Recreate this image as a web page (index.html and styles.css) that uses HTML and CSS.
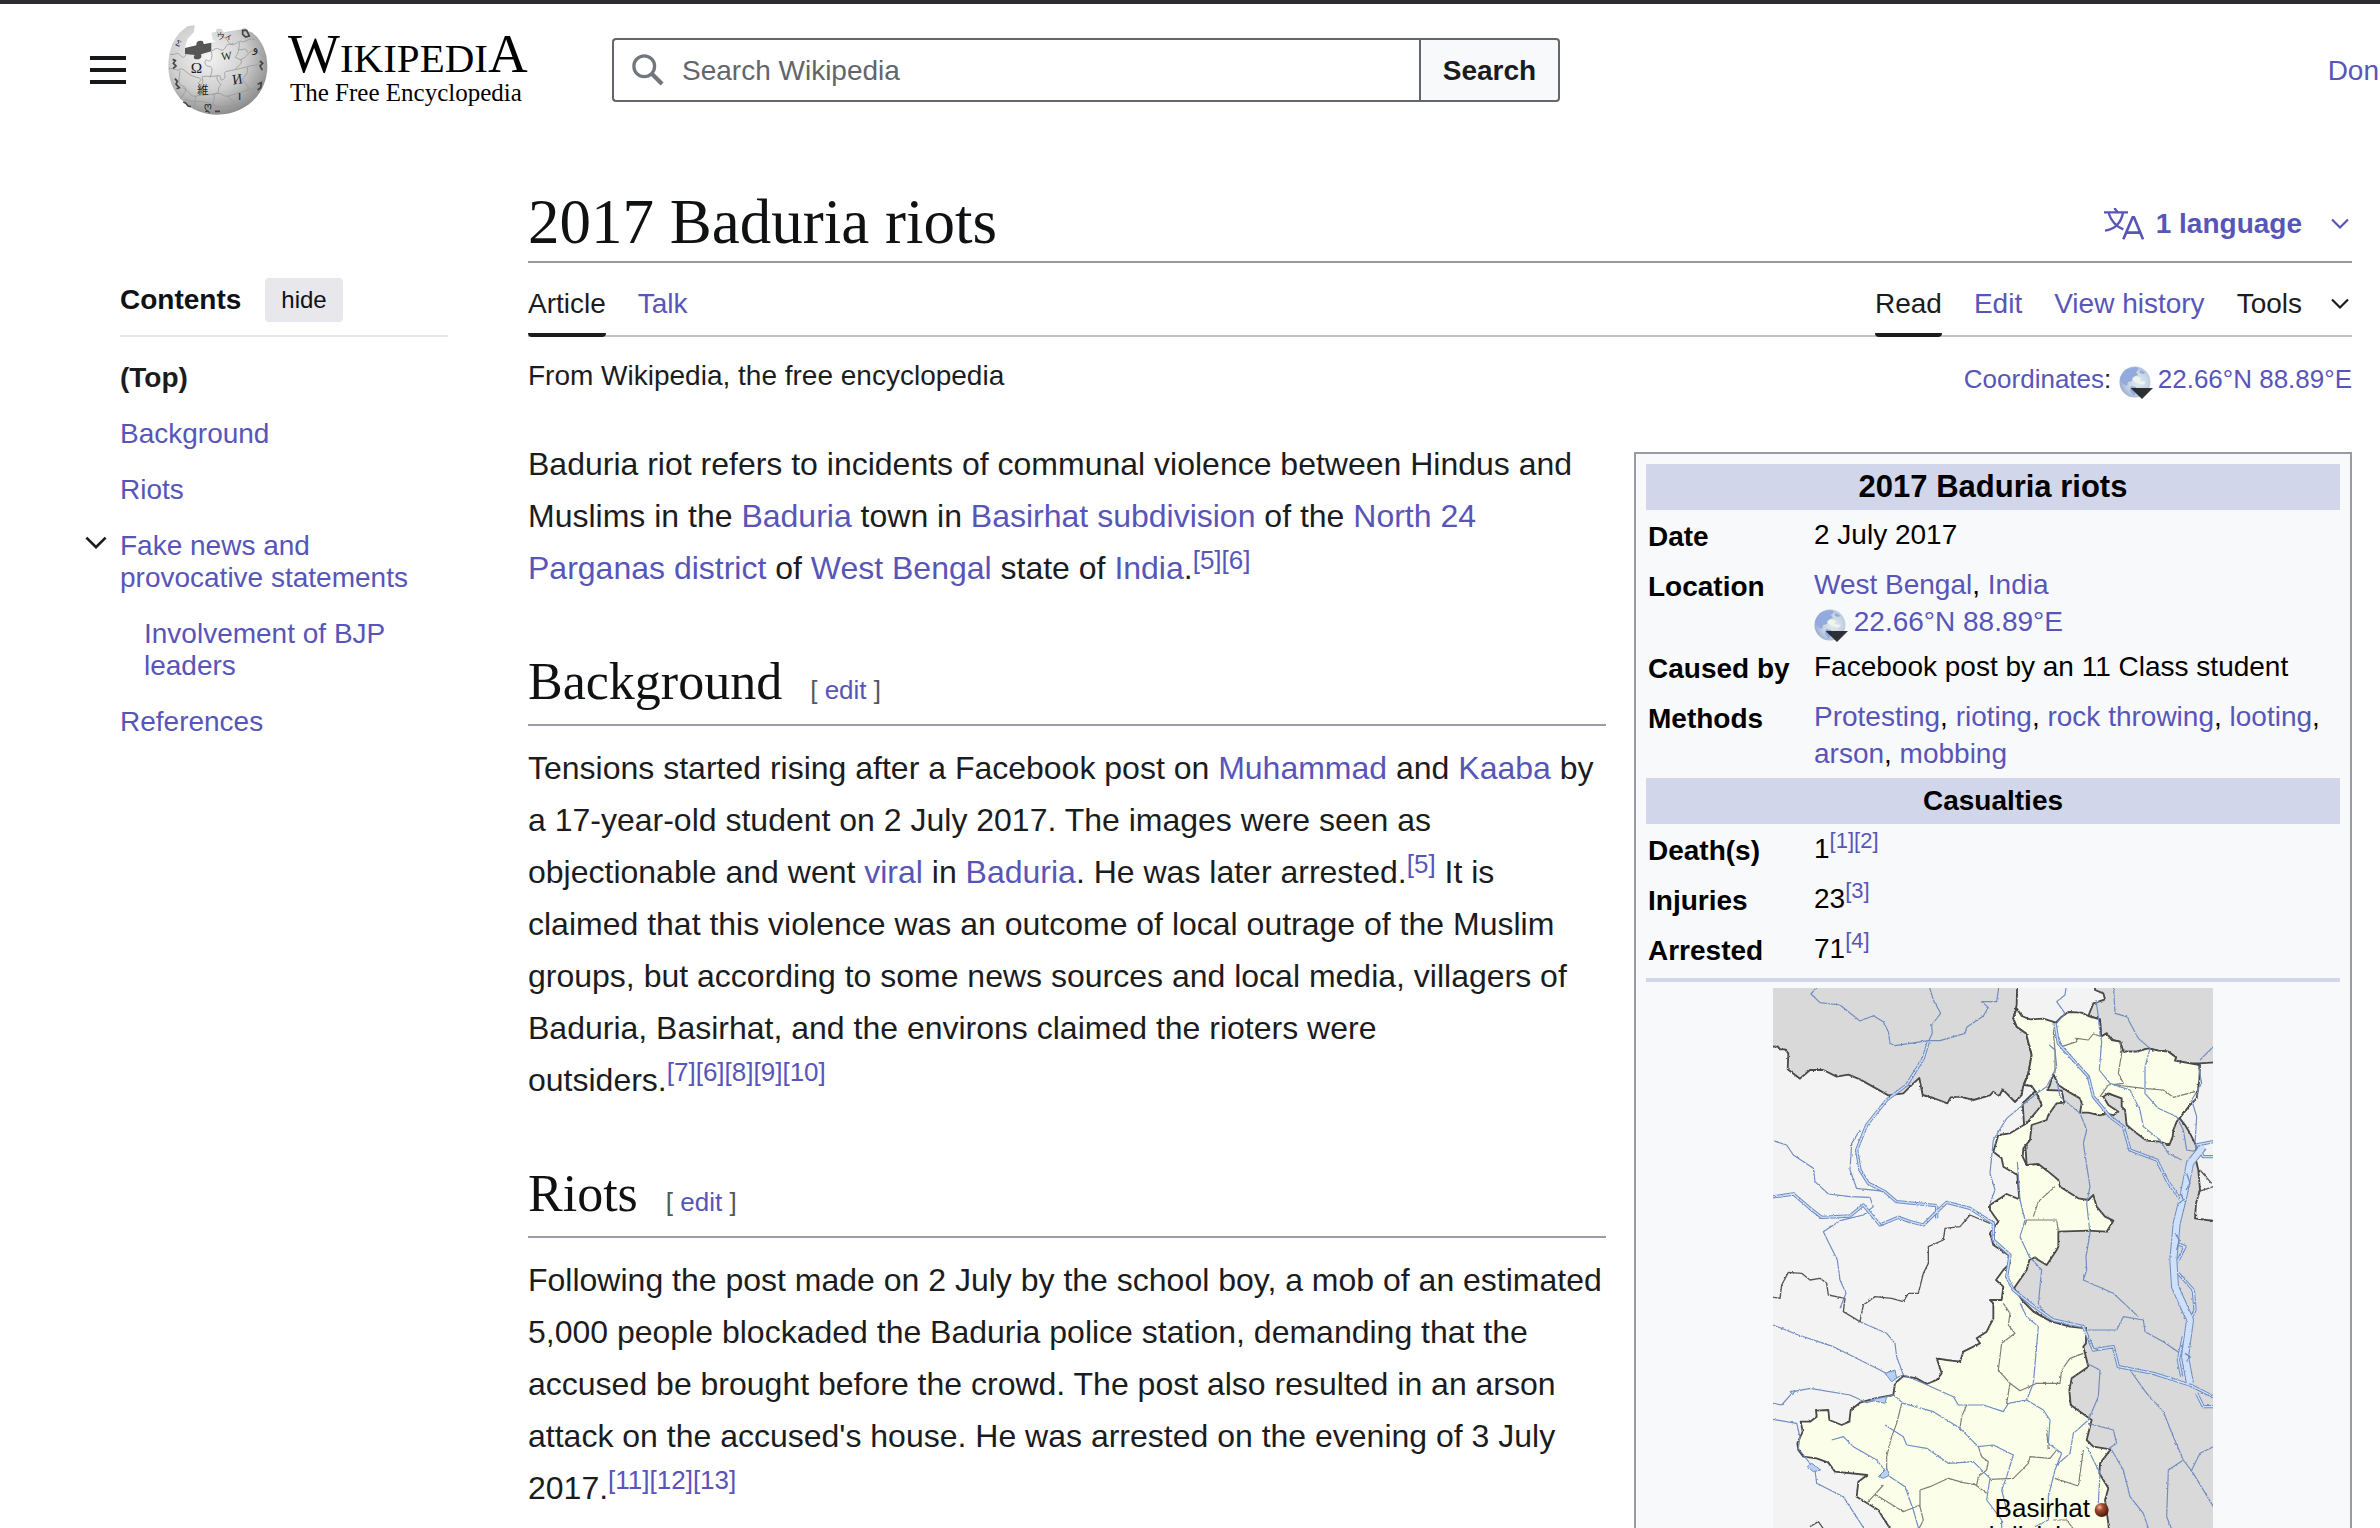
FILE: index.html
```html
<!DOCTYPE html>
<html lang="en">
<head>
<meta charset="utf-8">
<title>2017 Baduria riots - Wikipedia</title>
<link rel="stylesheet" href="styles.css">
</head>
<body>
<svg class="defs" width="0" height="0" aria-hidden="true">
  <defs>
    <radialGradient id="ball" cx=".4" cy=".35" r=".7"><stop offset="0" stop-color="#f4f4f4"/><stop offset=".55" stop-color="#cfcfcf"/><stop offset="1" stop-color="#858585"/></radialGradient>
    <radialGradient id="earth" cx=".6" cy=".5" r=".6"><stop offset="0" stop-color="#e2eeee"/><stop offset=".7" stop-color="#bccbe0"/><stop offset="1" stop-color="#9aa9cc"/></radialGradient>
    <radialGradient id="dot" cx=".35" cy=".3" r=".75"><stop offset="0" stop-color="#f0b8a0"/><stop offset=".35" stop-color="#a04a30"/><stop offset="1" stop-color="#4a1408"/></radialGradient>
    <symbol id="globe" viewBox="0 0 34 34">
      <circle cx="16" cy="16" r="15.500" fill="url(#earth)"/>
      <path d="M2 10 6 4 12 2 17 1 20 3 17 6 19 9 14 11 13 15 9 16 8 20 4 18 1 14ZM12 20 17 21 18 25 15 30 11 25ZM21 4 26 6 25 8 21 7Z" fill="#93aade"/>
      <path d="M17 10 22 12 20 15 27 16 24 19 16 16 13 13Z" fill="#f0f3ee"/>
      <path d="M11.500 22H34L23 33Z" fill="#1c1e20" opacity=".9"/>
    </symbol>
    <symbol id="chevron" viewBox="0 0 20 20"><path d="M2 5.500 10 13.500 18 5.500" fill="none" stroke="currentColor" stroke-width="2.200"/></symbol>
    <filter id="jag" x="0" y="0" width="1" height="1"><feTurbulence type="fractalNoise" baseFrequency=".12" numOctaves="2" seed="4"/><feDisplacementMap in="SourceGraphic" scale="7" xChannelSelector="R" yChannelSelector="G"/></filter>
  </defs>
</svg>

<header class="header">
  <button class="menu" aria-label="Main menu"><span></span><span></span><span></span></button>
  <a class="logo" href="#" aria-label="Wikipedia">
    <svg class="puzzle" viewBox="0 0 360 324" aria-hidden="true">
      <path d="M104 28C98 26 92 30 84 30C44 55 25 98 25 150C25 232 88 296 172 296C256 296 322 235 322 150C322 115 311 87 291 62L282 55C275 46 266 46 259 46C264 36 252 34 246 40L191 49L184 38L170 39L168 47L155 50L158 73L168 76L154 80L75 97L82 70L102 48Z" fill="url(#ball)"/>
      <path d="M75 96 109 88C108 78 114 73 127 75C132 77 128 84 133 84L154 80V106L123 115C127 125 120 131 110 130C101 130 99 122 104 117L75 114Z" fill="#565656"/>
      <g fill="none" stroke="#999" stroke-width="2.500">
        <path d="M30 115C45 118 50 108 58 115S70 130 78 116M154 107C160 130 150 140 142 133S130 150 146 151 155 170 150 185M154 106C175 90 172 100 183 102S195 95 200 88 215 90 220 80M26 158C45 155 50 168 60 160S80 178 110 184 106 200 118 205 130 190 126 184 155 184 172 179 175 200 190 190 180 170 205 165 255 155 270 150 290 155 305 130M200 70C210 85 215 90 228 82S240 70 236 100 215 120 235 128 240 145 225 160M240 75C255 85 268 60 285 72M240 132C270 120 265 100 285 105S300 125 320 120M60 165C58 190 50 205 68 210S75 230 60 250M68 215C95 230 90 245 110 240S135 238 160 235 170 215 180 210 165 195 172 180M110 240C100 255 110 265 100 280M160 235C170 250 150 260 165 268S185 275 178 294M160 235C190 225 185 245 205 240S235 230 255 225 260 205 250 195 268 180 262 155M205 240C215 260 230 255 225 275M255 225C275 215 285 225 310 195M75 250C100 262 130 250 155 265S230 270 280 245"/>
        <path d="M172 48C180 62 190 60 200 70M236 100C250 105 258 90 262 110"/>
      </g>
      <g fill="#222" font-family="Liberation Serif, serif">
        <text x="92" y="172" font-size="46">Ω</text><text x="183" y="131" font-size="34" transform="rotate(-6 200 120)">W</text><text x="217" y="203" font-size="42" transform="rotate(-8 235 190)">И</text><text x="112" y="233" font-size="34" font-family="Noto Sans CJK JP, sans-serif">維</text><text x="170" y="70" font-size="24" font-family="Noto Sans CJK JP, sans-serif">ウィ</text><text x="234" y="252" font-size="36" font-family="DejaVu Sans, sans-serif">ו</text><text x="278" y="108" font-size="34" font-family="DejaVu Sans, sans-serif">و</text><text x="132" y="281" font-size="30" font-family="DejaVu Sans, sans-serif">ღ</text><text x="48" y="90" font-size="26" transform="rotate(25 55 82)">Σ</text>
      </g>
      <path d="M248 43 260 43 268 60 257 63 248 55ZM38 130 46 134 40 142 48 150 39 158M300 135 308 142 300 150 307 162M45 188 52 196 48 204 58 215 50 218M293 205 304 200 302 215 293 222M70 258 78 262 84 270 93 272M165 286H180" fill="none" stroke="#444" stroke-width="5"/>
    </svg>
    <span class="words"><span class="wordmark"><b>W</b>IKIPEDI<b>A</b></span><span class="tagline">The Free Encyclopedia</span></span>
  </a>
  <form class="search" role="search">
    <label class="search-field">
      <svg viewBox="0 0 34 34" aria-hidden="true"><circle cx="13" cy="13" r="11" fill="none" stroke="#72777d" stroke-width="3.500"/><path d="M21 21 32 32" stroke="#72777d" stroke-width="4.500"/></svg>
      <input type="search" placeholder="Search Wikipedia" aria-label="Search Wikipedia">
    </label>
    <button type="button">Search</button>
  </form>
  <a class="donate" href="#">Don</a>
</header>

<div class="page">
  <nav class="toc" aria-label="Contents">
    <div class="toc-head"><strong>Contents</strong><button>hide</button></div>
    <ul>
      <li><a class="current" href="#">(Top)</a></li>
      <li><a href="#">Background</a></li>
      <li><a href="#">Riots</a></li>
      <li><button class="toggle" aria-label="Toggle subsection"><svg><use href="#chevron"/></svg></button><a href="#">Fake news and provocative statements</a>
        <ul><li><a href="#">Involvement of BJP leaders</a></li></ul></li>
      <li><a href="#">References</a></li>
    </ul>
  </nav>

  <main>
    <div class="title-row">
      <h1>2017 Baduria riots</h1>
      <button class="lang">
        <svg class="lang-icon" viewBox="0 0 120 96" aria-hidden="true"><g fill="none" stroke="currentColor"><path d="M0 13H72M31 0 41 13" stroke-width="7"/><path d="M14 15C22 42 38 56 58 64M57 15C50 48 30 64 3 68" stroke-width="7"/><path d="M58 94 86 28H90L117 94M67 74H109" stroke-width="8"/></g></svg>
        1 language <svg class="chev"><use href="#chevron"/></svg></button>
    </div>
    <div class="tabs">
      <a class="active" href="#">Article</a><a href="#">Talk</a>
      <span class="spacer"></span>
      <a class="active" href="#">Read</a><a href="#">Edit</a><a href="#">View history</a>
      <button class="tools">Tools <svg class="chev"><use href="#chevron"/></svg></button>
    </div>
    <div class="sub">
      <span>From Wikipedia, the free encyclopedia</span>
      <span class="coords"><a href="#">Coordinates</a>: <svg class="globe"><use href="#globe"/></svg> <a href="#">22.66°N 88.89°E</a></span>
    </div>
    <article>
      <table class="infobox">
        <tbody>
        <tr><th class="bar title" colspan="2">2017 Baduria riots</th></tr>
        <tr><th>Date</th><td>2 July 2017</td></tr>
        <tr><th>Location</th><td><a href="#">West Bengal</a>, <a href="#">India</a><br><svg class="globe"><use href="#globe"/></svg> <a href="#">22.66°N 88.89°E</a></td></tr>
        <tr><th>Caused by</th><td>Facebook post by an 11 Class student</td></tr>
        <tr><th>Methods</th><td><a href="#">Protesting</a>, <a href="#">rioting</a>, <a href="#">rock throwing</a>, <a href="#">looting</a>, <a href="#">arson</a>, <a href="#">mobbing</a></td></tr>
        <tr><th class="bar" colspan="2">Casualties</th></tr>
        <tr><th>Death(s)</th><td>1<sup><a href="#">[1]</a><a href="#">[2]</a></sup></td></tr>
        <tr><th>Injuries</th><td>23<sup><a href="#">[3]</a></sup></td></tr>
        <tr><th>Arrested</th><td>71<sup><a href="#">[4]</a></sup></td></tr>
        <tr><td class="map-cell" colspan="2"><div class="map">
          <svg viewBox="39 54 1320 1620" aria-label="Map of West Bengal">
            <rect x="39" y="54" width="1320" height="1620" fill="#f3f3f3"/>
            <g filter="url(#jag)" stroke-linejoin="round">
              <g fill="#d9d9d9" stroke="#484848" stroke-width="5.500">
                <path d="M0 232 53 229 60 238 75 238 85 250 83 298 120 326 150 300 190 300 230 320 265 314 300 328 385 376 430 370 460 340 478 324 488 375 520 384 562 400 572 382 600 380 640 390 690 376 700 365 718 378 728 358 765 396 785 375 790 345 805 310 815 255 798 190 770 170 760 145 770 105 772 20 0 20Z"/>
                <path d="M1005 20 1005 60 1030 70 1035 88 1000 100 985 138 1020 148 1023 200 1040 190 1055 210 1080 215 1090 245 1130 245 1165 235 1195 242 1225 245 1248 262 1245 272 1290 280 1318 280 1400 275 1400 20Z"/>
                <path d="M880 310 960 340 1100 390 1255 440 1275 465 1290 490 1310 530 1305 560 1315 600 1320 660 1308 700 1305 745 1340 750 1400 757V1720H1040L1000 1500 960 1350 900 1250 940 1150 940 1085 870 1053 820 1025 790 995 762 955 750 800 800 585 788 400Z"/>
              </g>
              <path d="M760 145 770 115 785 138 810 148 850 146 888 158 905 140 925 126 965 128 985 138 1020 148 1023 200 1040 190 1055 210 1080 215 1090 245 1130 245 1165 235 1195 242 1225 245 1248 262 1245 272 1290 280 1320 285 1318 330 1310 385 1290 405 1270 430 1250 455 1240 480 1238 500 1228 525 1200 515 1160 512 1130 490 1100 465 1095 420 1085 410 1085 385 1045 370 1030 380 1045 405 1075 425 1060 436 1040 430 1020 436 985 428 960 428 965 400 960 385 930 368 895 345 880 312 870 345 862 360 905 362 913 398 890 400 865 435 860 450 815 465 810 510 790 535 788 560 800 585 835 582 865 605 895 630 900 650 955 685 985 690 1000 675 1010 710 1035 740 1060 752 1040 785 985 782 895 785 895 830 890 840 880 855 860 885 835 870 825 862 808 870 800 900 762 955 790 995 820 1025 870 1053 930 1070 978 1075 978 1120 970 1130 985 1190 935 1225 928 1260 932 1305 995 1350 980 1410 1000 1430 1052 1438 1020 1480 1018 1510 1045 1555 1035 1590 1045 1660 1050 1720 400 1720 400 1690 370 1645 355 1620 290 1580 295 1535 322 1515 225 1505 205 1478 170 1465 130 1460 115 1440 112 1420 128 1385 122 1355 150 1355 170 1340 168 1322 205 1320 208 1350 245 1365 268 1355 272 1320 300 1298 345 1285 400 1275 405 1240 430 1218 470 1225 500 1242 530 1230 545 1210 530 1165 560 1170 600 1175 610 1145 660 1120 650 1105 680 1085 700 1045 700 1000 690 990 725 990 730 950 708 930 730 900 750 880 745 855 700 825 690 790 715 755 690 720 690 705 740 672 778 688 772 615 730 590 725 565 700 545 715 495 750 490 800 460 845 405 830 370 815 348 792 345 805 310 815 255 798 190 770 170Z" fill="#fbfee8" stroke="#484848" stroke-width="5.500"/>
              <path d="M30 980 60 985 65 945 85 907 125 910 150 930 180 925 200 940 205 975 255 985 250 1025 300 1055 310 1005 345 980 395 985 430 995 445 970 475 970 490 910 505 880 505 830 550 810 555 775 600 770 630 735 690 760M1320 600 1355 640M1315 665 1360 650M150 1670 175 1655 200 1690" fill="none" stroke="#555" stroke-width="4"/>
              <path d="M885 160 880 190 905 230 950 215 950 205 985 210 1000 192 1025 200M880 190 885 240 885 310M1080 215 1085 250 1075 310 1090 340 1045 345 1020 380M1070 345 1150 355 1210 360 1240 382 1305 365M795 765 800 750 890 750 895 785M820 740 835 695 885 650M730 1000 750 1030 745 1065 765 1090 725 1120 715 1200 750 1240 740 1300 745 1300M750 1240 780 1262 830 1240 900 1240 905 1200 930 1165 970 1150M425 1300 410 1360 395 1400 380 1460 380 1500M620 1305 605 1340 600 1375M655 1430 665 1460 685 1475 680 1500 655 1520 650 1545 610 1538M690 1528 760 1525 805 1480 810 1460 870 1465 890 1440M610 1538 565 1525 510 1550 480 1560 480 1610 490 1650 470 1690M345 1573 430 1625 480 1605M345 1573 370 1545M885 1525 955 1548 970 1440M640 1540 680 1570M320 1600 345 1573M865 1440 860 1380M880 1650 920 1650 950 1690" fill="none" stroke="#7d7d76" stroke-width="3.500"/>
              <g fill="none" stroke="#6f8cc0" stroke-width="3.500">
                <path d="M180 40 153 72 180 98 240 105 300 153 340 137 370 155 385 185 390 220 405 227 505 212 540 212 615 190 620 172 670 138 685 112 665 95 710 95 718 40M505 40 520 90 542 130 515 165 517 190 505 215"/>
                <path d="M39 512 80 525 100 555 160 595 165 635 205 672 270 680 330 682 340 710 310 735 240 752 190 785 232 870 240 930 258 970 240 1015M380 665 290 655 270 600 275 520 300 480M690 700 705 660 690 610 700 510 740 445 830 370 860 350 890 290 885 240 868 225M920 40 915 75 890 95 915 130 885 165 905 230"/>
                <path d="M1008 90 1015 140 1020 190 1025 215 1018 300 1050 340 1110 360 1140 420 1150 470 1200 510 1225 550 1265 570M1060 40 1065 130 1100 140 1135 205 1170 235 1155 290 1155 370 1195 415 1250 440 1270 480 1280 540 1310 545M1315 285 1325 340 1295 390 1310 440 1305 520M1320 270 1360 230M890 330 900 380 960 430 980 480 970 520 990 650 980 700 990 790 978 860 980 900 970 930 1060 970 1135 1040M772 575 780 690 795 750 780 800 808 860 845 900 835 1000 860 1040M780 1000 800 1040 835 1070 820 1240 800 1290 850 1320 870 1350 865 1420 905 1450 885 1500 865 1580 865 1650 825 1670"/>
                <path d="M39 1065 115 1095 220 1130 270 1155 360 1200 405 1225 430 1215 490 1240 580 1280 595 1305 670 1305 730 1325 745 1300 800 1290M300 1055 380 1090 405 1120 410 1160 430 1215M39 1300 65 1305 100 1265 150 1255 270 1275 320 1298 400 1275 430 1300 520 1325 600 1375 655 1430 700 1425 760 1455 740 1520 725 1560 740 1620M375 1365 430 1400 440 1425 500 1435 565 1480 640 1475 690 1525 680 1590 725 1650 725 1700M215 1410 250 1400 280 1430 350 1470 390 1520 435 1550 460 1620 480 1690M39 1348 110 1360 120 1400 115 1435 165 1500 170 1540 250 1580 315 1680M980 1080 1070 1080 1090 1040 1150 1050 1155 1085 1210 1115 1260 1150M980 1180 1020 1200 1015 1280 985 1350 940 1390 930 1450 890 1485M1110 1200 1160 1270 1210 1325 1240 1400 1270 1470 1300 1510 1360 1610M1295 1500 1320 1450 1360 1430M1270 1470 1225 1500 1220 1640 1240 1690M1055 1440 1090 1500 1110 1580 1150 1630 1170 1690M980 1430 1020 1510 1015 1600M985 1360 1060 1380 1070 1420 1040 1440"/>
              </g>
              <path d="M375 1210 405 1200 410 1225 395 1235ZM330 1290 380 1280 375 1300ZM142 1490 155 1480 182 1500 160 1505ZM355 1520 380 1495 390 1515 370 1525ZM90 1265 105 1262 98 1275Z" fill="#b8d0f5" stroke="#6f8cc0" stroke-width="3"/>
              <g fill="none" stroke="#6f8cc0" stroke-width="10">
                <path d="M505 215 490 265 440 345 380 390 320 465 290 540 300 600 325 640 375 665 410 695 530 707M30 682 100 672 150 715 185 742 270 738 310 705 360 765 415 742 450 755 490 765 520 735 560 697 630 715 700 760 700 810 750 855 740 920 760 960 810 1000 880 1050 970 1070 1000 1140 1060 1130 1075 1190 1180 1210 1290 1245 1360 1280M885 160 895 220 985 320 1000 380 1050 440 1090 470 1110 540 1190 570 1220 630 1255 680M530 707 530 745"/>
                <path d="M1330 530 1290 580 1270 680 1250 760 1240 870 1245 950 1290 1050 1275 1160 1290 1240" stroke-width="24"/>
                <path d="M1360 515 1310 525 1330 560 1360 560M1255 910 1300 960 1305 1020 1285 1060M1270 1100 1255 1170 1265 1220M1255 870 1275 830 1250 820M1310 1270 1330 1310 1360 1310"/>
                <path d="M505 215 490 265 440 345 380 390 320 465 290 540 300 600 325 640 375 665 410 695 530 707M30 682 100 672 150 715 185 742 270 738 310 705 360 765 415 742 450 755 490 765 520 735 560 697 630 715 700 760 700 810 750 855 740 920 760 960 810 1000 880 1050 970 1070 1000 1140 1060 1130 1075 1190 1180 1210 1290 1245 1360 1280M885 160 895 220 985 320 1000 380 1050 440 1090 470 1110 540 1190 570 1220 630 1255 680M530 707 530 745M1360 515 1310 525 1330 560 1360 560M1255 910 1300 960 1305 1020 1285 1060M1270 1100 1255 1170 1265 1220M1255 870 1275 830 1250 820M1310 1270 1330 1310 1360 1310" stroke="#cfe0fb" stroke-width="4"/>
                <path d="M1330 530 1290 580 1270 680 1250 760 1240 870 1245 950 1290 1050 1275 1160 1290 1240" stroke="#cfe0fb" stroke-width="18"/>
                <path d="M1280 610 1290 640 1278 660M1262 670 1270 690 1258 700M1245 790 1258 810 1250 840M1275 1150 1290 1160 1280 1175" stroke-width="4"/>
              </g>
            </g>
            <circle cx="1025" cy="1620" r="21" fill="url(#dot)"/>
          </svg>
          <span class="place">Basirhat<br>subdivision</span>
        </div></td></tr>
        </tbody>
      </table>
      <p>Baduria riot refers to incidents of communal violence between Hindus and Muslims in the <a href="#">Baduria</a> town in <a href="#">Basirhat subdivision</a> of the <a href="#">North 24 Parganas district</a> of <a href="#">West Bengal</a> state of <a href="#">India</a>.<sup><a href="#">[5]</a><a href="#">[6]</a></sup></p>
      <div class="heading"><h2>Background</h2><span class="edit">[ <a href="#">edit</a> ]</span></div>
      <p>Tensions started rising after a Facebook post on <a href="#">Muhammad</a> and <a href="#">Kaaba</a> by a 17-year-old student on 2 July 2017. The images were seen as objectionable and went <a href="#">viral</a> in <a href="#">Baduria</a>. He was later arrested.<sup><a href="#">[5]</a></sup> It is claimed that this violence was an outcome of local outrage of the Muslim groups, but according to some news sources and local media, villagers of Baduria, Basirhat, and the environs claimed the rioters were <span class="nowrap">outsiders.<sup><a href="#">[7]</a><a href="#">[6]</a><a href="#">[8]</a><a href="#">[9]</a><a href="#">[10]</a></sup></span></p>
      <div class="heading"><h2>Riots</h2><span class="edit">[ <a href="#">edit</a> ]</span></div>
      <p>Following the post made on 2 July by the school boy, a mob of an estimated 5,000 people blockaded the Baduria police station, demanding that the accused be brought before the crowd. The post also resulted in an arson attack on the accused's house. He was arrested on the evening of 3 July 2017.<sup><a href="#">[11]</a><a href="#">[12]</a><a href="#">[13]</a></sup></p>
    </article>
  </main>
</div>
</body>
</html>
```
FILE: styles.css
```css
* { box-sizing: border-box; }

body {
  margin: 0;
  height: 100vh;
  overflow: hidden;
  border-top: 4px solid #2d2d31;
  background: #fff;
  color: #1b1c1e;
  font: 28px/32px "Liberation Sans", Arial, sans-serif;
}

a { color: #5855b9; text-decoration: none; }
button { font: inherit; color: inherit; border: 0; padding: 0; background: none; }
svg { display: block; flex: none; }
.defs { position: absolute; }
.nowrap { white-space: nowrap; }

.header {
  display: flex;
  align-items: center;
  height: 132px;
  padding-left: 90px;
}
.menu { display: grid; gap: 8px; width: 36px; margin-right: 34px; }
.menu span { height: 4px; background: #17181a; }
.logo { display: flex; align-items: center; gap: 8px; width: 368px; color: #000; }
.puzzle { width: 120px; height: 108px; }
.words { display: flex; flex-direction: column; font-family: "Liberation Serif", "Times New Roman", serif; white-space: nowrap; }
.wordmark { font-size: 41px; line-height: 42px; }
.wordmark b { font-size: 55px; font-weight: 400; line-height: 42px; }
.tagline { padding-left: 2px; font-size: 25px; line-height: 28px; }

.search { display: flex; width: 948px; height: 64px; margin-left: 84px; }
.search-field {
  display: flex;
  flex: 1;
  align-items: center;
  gap: 18px;
  padding-left: 18px;
  border: 2px solid #63666d;
  border-right: 0;
  border-radius: 4px 0 0 4px;
}
.search-field svg { width: 32px; height: 32px; }
.search-field input { flex: 1; min-width: 0; padding: 1px 0 0; border: 0; outline: 0; background: none; font: inherit; }
.search-field input::placeholder { color: #62656b; opacity: 1; }
.search button {
  width: 141px;
  padding-top: 1px;
  border: 2px solid #63666d;
  border-radius: 0 4px 4px 0;
  background: #f8f9fa;
  font-weight: 700;
}
.donate { margin-left: auto; padding: 1px 1px 0 0; }

.page {
  display: grid;
  grid-template-columns: 328px minmax(0, 1fr);
  gap: 80px;
  padding: 0 28px 0 120px;
}

.toc { padding-top: 142px; }
.toc-head {
  display: flex;
  gap: 24px;
  padding-bottom: 13px;
  border-bottom: 2px solid #e6e6ec;
  line-height: 44px;
  color: #101113;
}
.toc-head button { padding: 0 16px; border-radius: 4px; background: #e7e7ec; font-size: 24px; }
.toc ul { display: grid; gap: 24px; margin: 24px 0 0; padding: 0; list-style: none; }
.toc > ul { margin-top: 25px; }
.toc li { position: relative; }
.toc ul ul { padding-left: 24px; }
.toc a { display: block; }
.toc .current { color: #1b1c1e; font-weight: 700; }
.toggle { position: absolute; left: -36px; top: 1px; }
.toggle svg { width: 24px; height: 24px; }

main { padding-top: 47px; }
.title-row {
  display: flex;
  justify-content: space-between;
  align-items: center;
  border-bottom: 2px solid #969ba1;
}
h1, h2 { margin: 0; font-family: "Liberation Serif", "Times New Roman", serif; font-weight: 400; color: #101113; }
h1 { font-size: 63px; line-height: 78px; }
.lang { display: flex; align-items: center; gap: 12px; padding-top: 4px; color: #5855b9; font-weight: 700; }
.lang-icon { width: 40px; height: 32px; }
.chev { width: 20px; height: 20px; margin: 0 2px 0 28px; }
.lang .chev { margin-left: 16px; }

.tabs {
  display: flex;
  gap: 32px;
  height: 74px;
  padding-top: 25px;
  border-bottom: 2px solid #c1c1c8;
}
.tabs a { height: 49px; border-bottom: 4px solid transparent; }
.tabs .active { color: #1b1c1e; border-color: #1b1c1e; border-radius: 0 0 4px 4px; }
.spacer { flex: 1; }
.tools { display: flex; align-items: center; height: 32px; }

.sub { display: flex; justify-content: space-between; margin: 23px 0 40px; }
.coords { font-size: 26px; line-height: 38px; }
.globe { display: inline-block; width: 34px; height: 34px; vertical-align: -8px; margin: -4px -2px -4px 0; }

article p { margin: 0 0 54px; font-size: 32px; line-height: 52px; }
sup { font-size: 26px; line-height: 26px; vertical-align: 10px; }
.heading {
  display: flex;
  align-items: baseline;
  gap: 28px;
  margin-bottom: 16px;
  padding-bottom: 8px;
  border-bottom: 2px solid #9b9ea5;
}
h2 { font-size: 52px; line-height: 68px; }
.edit { font-size: 26px; color: #54595d; }

.infobox {
  float: right;
  width: 718px;
  margin: 14px 0 0 28px;
  padding: 6px;
  border: 2px solid #989ca2;
  border-spacing: 4px;
  background: #f8f9fa;
  color: #000;
  line-height: 37px;
}
.infobox th, .infobox td { padding: 2px; text-align: left; vertical-align: top; }
.infobox th { width: 162px; line-height: 42px; }
.infobox .bar { background: #d1d6ea; text-align: center; }
.infobox .title { font-size: 31px; }
.infobox sup { font-size: 22px; line-height: 22px; vertical-align: 10px; }
.infobox .map-cell { padding: 6px 0; border-top: 4px solid #d1d6ea; }
.map { position: relative; width: 440px; margin: 0 auto; }
.map > svg { width: 440px; height: 540px; }
.place {
  position: absolute;
  right: 123px;
  top: 506px;
  text-align: right;
  font-size: 26px;
  line-height: 28px;
}
```
